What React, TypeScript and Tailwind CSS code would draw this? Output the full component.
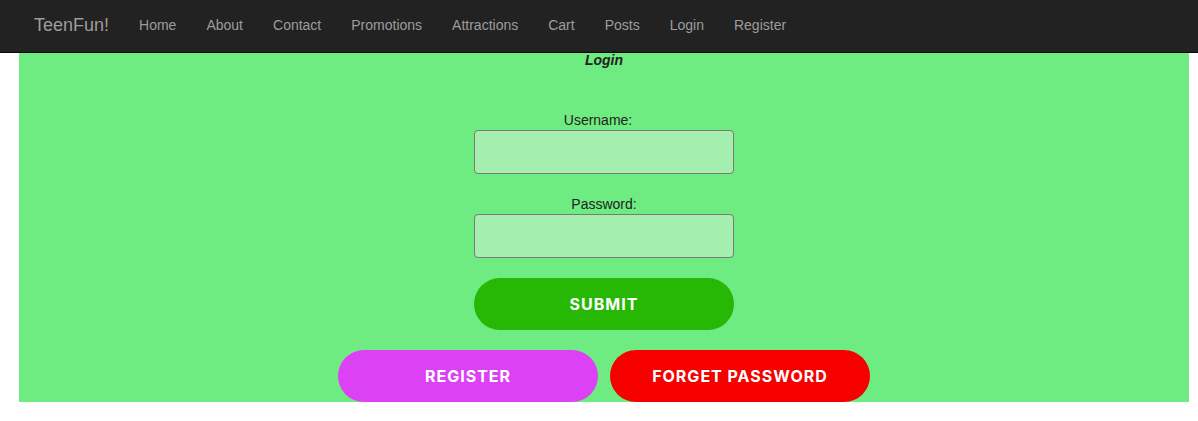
import { useState } from 'react'

const links = ['Home', 'About', 'Contact', 'Promotions', 'Attractions', 'Cart', 'Posts', 'Login', 'Register']

export default function App() {
  const [username, setUsername] = useState('')
  const [password, setPassword] = useState('')

  return (
    <div className="min-h-screen bg-white" style={{ fontFamily: '"Liberation Sans", Arial, sans-serif' }}>
      <nav className="h-[53px] bg-[#222222] border-b border-[#080808]">
        <div className="w-[1170px] ml-[19px] flex items-center h-full pb-[2px]">
          <a className="px-[15px] text-[18px] text-[#9d9d9d] leading-[20px]">TeenFun!</a>
          <ul className="flex">
            {links.map((l) => (
              <li key={l}>
                <a className="block px-[15px] text-[14px] text-[#9d9d9d] leading-[20px]">{l}</a>
              </li>
            ))}
          </ul>
        </div>
      </nav>

      <div className="w-[1170px] ml-[19px] bg-[#6fec81] flex flex-col items-center text-[14px] text-[#222]">
        <div className="font-bold italic leading-[14px]">Login</div>

        <label className="mt-[43px] mr-[12px] leading-[20px]">Username:</label>
        <input
          value={username}
          onChange={(e) => setUsername(e.target.value)}
          className="w-[260px] h-[44px] bg-[#a4eeae] border border-[#7a7a7a] rounded-[4px] outline-none px-2"
        />

        <label className="mt-[20px] leading-[20px]">Password:</label>
        <input
          type="password"
          value={password}
          onChange={(e) => setPassword(e.target.value)}
          className="w-[260px] h-[44px] bg-[#a4eeae] border border-[#7a7a7a] rounded-[4px] outline-none px-2"
        />

        <button
          className="mt-[20px] w-[260px] h-[52px] rounded-full bg-[#26b804] text-white font-bold text-[16px] tracking-[1px]"
          style={{ fontFamily: 'Inter, sans-serif' }}
        >
          SUBMIT
        </button>

        <div className="mt-[20px] flex gap-[12px]" style={{ fontFamily: 'Inter, sans-serif' }}>
          <button className="w-[260px] h-[52px] rounded-full bg-[#dd41f5] text-white font-bold text-[16px] tracking-[1px]">
            REGISTER
          </button>
          <button className="w-[260px] h-[52px] rounded-full bg-[#f70000] text-white font-bold text-[16px] tracking-[1px]">
            FORGET PASSWORD
          </button>
        </div>
      </div>
    </div>
  )
}
